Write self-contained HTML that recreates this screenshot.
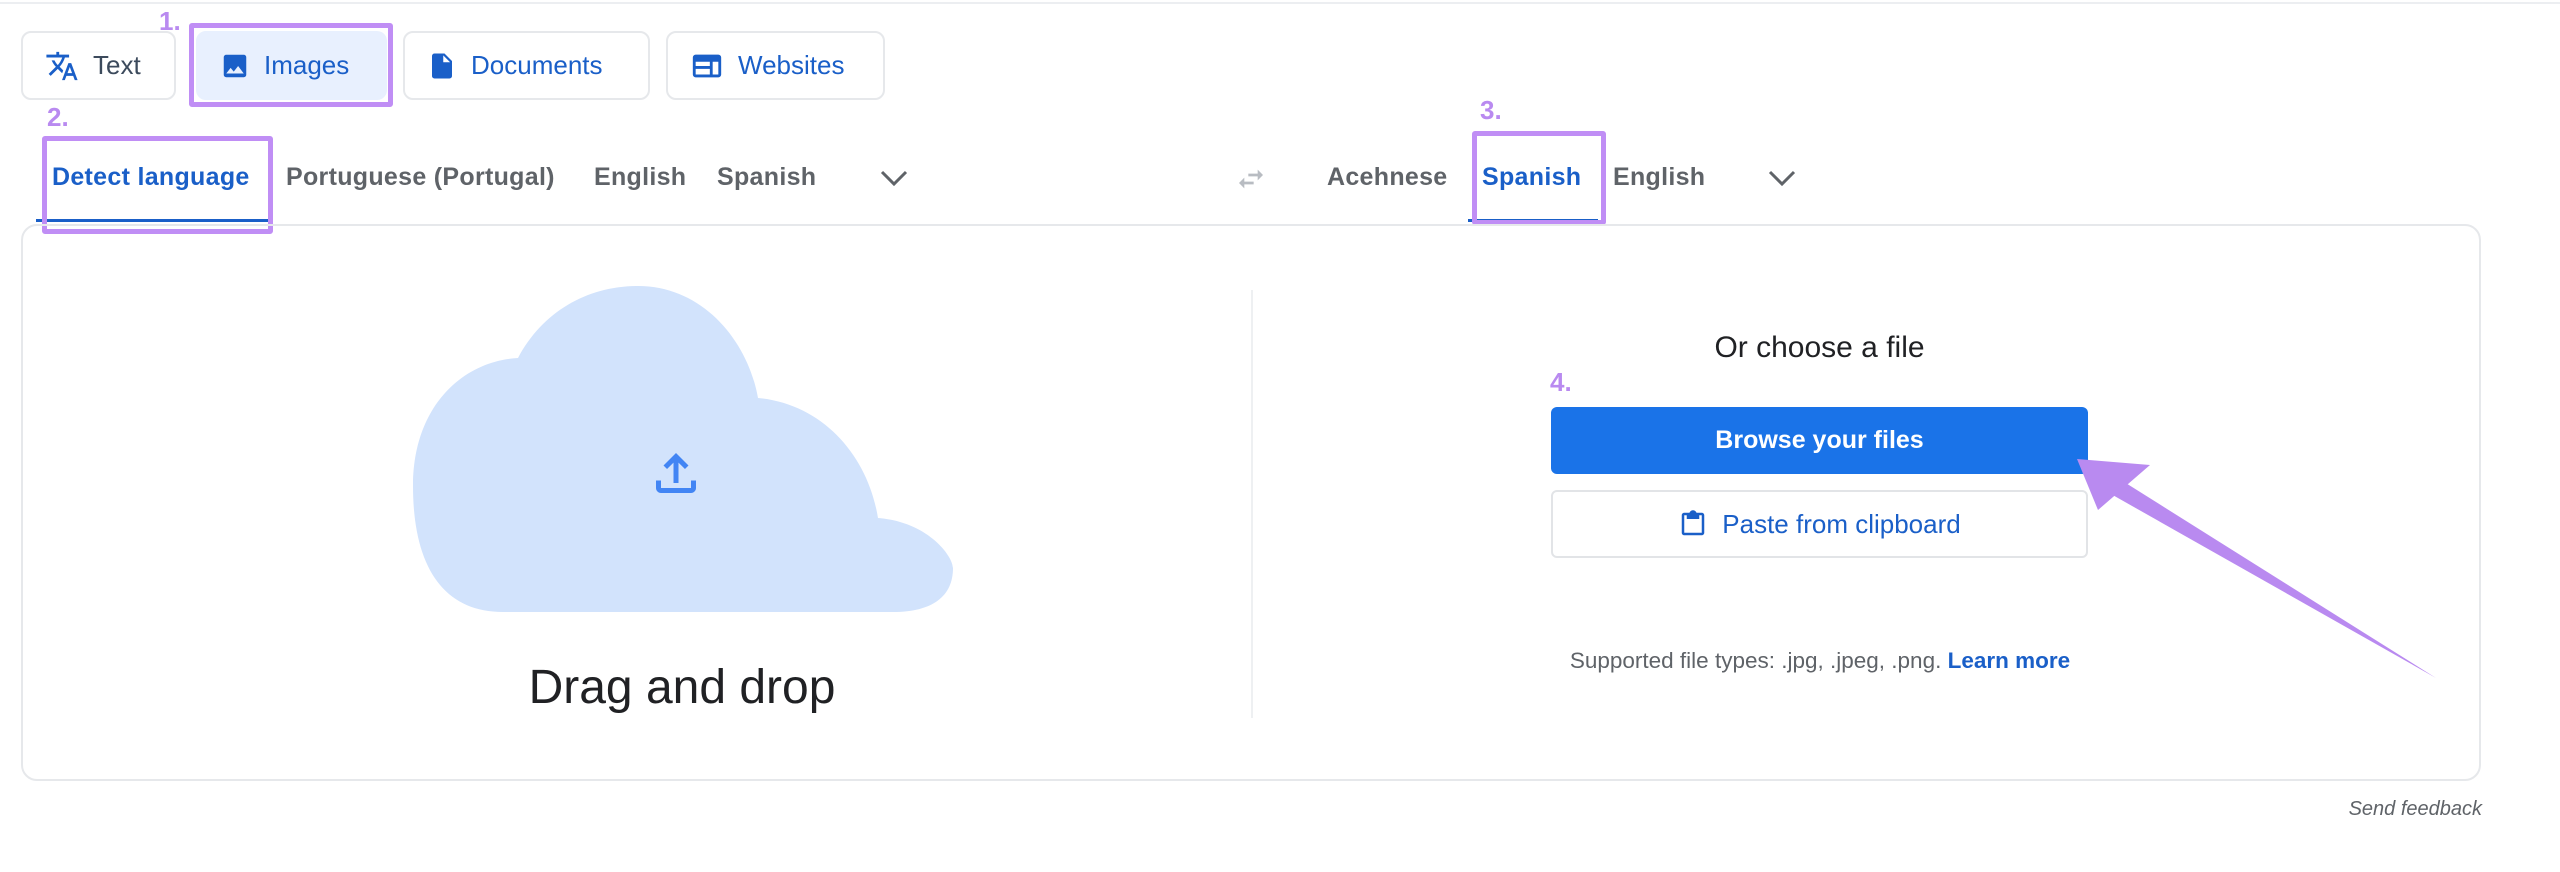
<!DOCTYPE html>
<html><head><meta charset="utf-8"><style>
*{margin:0;padding:0;box-sizing:border-box}
body{width:2560px;height:872px;background:#fff;font-family:"Liberation Sans",sans-serif;position:relative;overflow:hidden}
.a{position:absolute}
.tab{position:absolute;top:31px;height:69px;border:2px solid #e6e8eb;border-radius:10px;display:flex;align-items:center;font-size:26px;color:#1a5fc8;gap:14px;padding-left:22px}
.lang{position:absolute;top:163px;font-size:25px;font-weight:bold;color:#5f6368;letter-spacing:0.3px}
.num{position:absolute;font-size:26px;font-weight:bold;color:#b98af0}
.pbox{position:absolute;border:5px solid #c08ef5;border-radius:3px}
</style></head><body>
<div class="a" style="left:0;top:2px;width:2560px;height:2px;background:#eceef1"></div>

<div class="tab" style="left:21px;width:155px;color:#1a5fc8">
<svg width="34" height="34" viewBox="0 0 24 24"><path fill="#1a5fc8" d="M12.87 15.07l-2.54-2.51.03-.03A17.5 17.5 0 0014.07 6H17V4h-7V2H8v2H1v2h11.17C11.5 7.92 10.440 9.75 9 11.35 8.07 10.32 7.3 9.19 6.69 8h-2c.73 1.63 1.73 3.17 2.98 4.56l-5.09 5.02L4 19l5-5 3.11 3.11.76-2.04zM18.5 10h-2L12 22h2l1.12-3h4.75L21 22h2l-4.5-12zm-2.620 7l1.62-4.33L19.12 17h-3.24z"/></svg>
<span style="color:#3c4a5c">Text</span></div>
<div class="tab" style="left:196px;width:191px;background:#e8f0fe;border-color:#e8f0fe">
<svg width="30" height="30" viewBox="0 0 24 24"><path fill="#1a5fc8" d="M21 19V5a2 2 0 00-2-2H5a2 2 0 00-2 2v14a2 2 0 002 2h14a2 2 0 002-2zM8.5 13.5l2.5 3 3.5-4.5 4.5 6H5l3.5-4.5z"/></svg>Images</div>
<div class="pbox" style="left:189px;top:23px;width:204px;height:84px"></div>
<div class="tab" style="left:403px;width:247px">
<svg width="30" height="34" viewBox="0 0 24 24"><path fill="#1a5fc8" d="M14 2H6a2 2 0 00-2 2v16a2 2 0 002 2h12a2 2 0 002-2V8l-6-6zm-1 7V3.5L18.5 9H13z"/></svg>Documents</div>
<div class="tab" style="left:666px;width:219px">
<svg width="34" height="34" viewBox="0 0 24 24"><path fill="#1a5fc8" d="M20 4H4a2 2 0 00-2 2v12a2 2 0 002 2h16a2 2 0 002-2V6a2 2 0 00-2-2zM4 9h10v3H4V9zm0 5h10v4H4v-4zm16 4h-4V9h4v9z"/></svg>Websites</div>
<div class="num" style="left:159px;top:6px">1.</div>
<div class="num" style="left:47px;top:102px">2.</div>
<div class="num" style="left:1480px;top:95px">3.</div>
<div class="num" style="left:1550px;top:367px">4.</div>

<div class="lang" style="left:52px;color:#1a5fc8">Detect language</div>
<div class="a" style="left:36px;top:219px;width:233px;height:3px;background:#1a5fc8"></div>
<div class="pbox" style="left:42px;top:136px;width:231px;height:98px"></div>
<div class="lang" style="left:286px">Portuguese (Portugal)</div>
<div class="lang" style="left:594px">English</div>
<div class="lang" style="left:717px">Spanish</div>
<svg class="a" style="left:879px;top:168px" width="30" height="22" viewBox="0 0 30 22"><path d="M3 4l12 12 12-12" stroke="#5f6368" stroke-width="3" fill="none"/></svg>
<svg class="a" style="left:1234px;top:163px" width="34" height="32" viewBox="0 0 24 24"><path fill="#b8bcc2" d="M6.99 11L3 15l3.99 4v-3H14v-2H6.99v-3zM21 9l-3.99-4v3H10v2h7.01v3L21 9z"/></svg>
<div class="lang" style="left:1327px">Acehnese</div>
<div class="lang" style="left:1482px;color:#1a5fc8">Spanish</div>
<div class="a" style="left:1468px;top:219px;width:130px;height:3px;background:#1a5fc8"></div>
<div class="lang" style="left:1613px">English</div>
<svg class="a" style="left:1767px;top:168px" width="30" height="22" viewBox="0 0 30 22"><path d="M3 4l12 12 12-12" stroke="#5f6368" stroke-width="3" fill="none"/></svg>
<div class="pbox" style="left:1472px;top:131px;width:134px;height:94px"></div>

<div class="a" style="left:21px;top:224px;width:2460px;height:557px;border:2px solid #e6e8eb;border-radius:16px"></div>
<div class="a" style="left:1251px;top:290px;width:2px;height:428px;background:#eef0f2"></div>

<svg class="a" style="left:413px;top:286px" width="540" height="328" viewBox="0 0 540 328">
<path fill="#d2e3fc" d="M90 326 C30 326 0 280 0 200 C0 120 50 75 105 72 C130 25 175 0 225 0 C290 0 335 55 345 112 C410 118 455 170 465 232 C515 236 540 270 540 282 C540 310 520 326 480 326 Z"/>
</svg>
<svg class="a" style="left:646px;top:443px" width="60" height="60" viewBox="0 0 24 24"><path fill="#4285f4" d="M18 15v3H6v-3H4v3c0 1.1.9 2 2 2h12c1.1 0 2-.9 2-2v-3h-2zM7 9l1.41 1.41L11 7.83V16h2V7.83l2.59 2.58L17 9l-5-5-5 5z"/></svg>
<div class="a" style="left:432px;top:660px;width:500px;text-align:center;font-size:48px;color:#202124">Drag and drop</div>

<div class="a" style="left:1551px;top:331px;width:537px;text-align:center;font-size:30px;color:#202124">Or choose a file</div>
<div class="a" style="left:1551px;top:407px;width:537px;height:67px;background:#1a73e8;border-radius:6px;color:#fff;font-size:25px;font-weight:bold;display:flex;align-items:center;justify-content:center">Browse your files</div>
<div class="a" style="left:1551px;top:490px;width:537px;height:68px;border:2px solid #e2e4e7;border-radius:6px;color:#1a5fc8;font-size:26px;display:flex;align-items:center;justify-content:center;gap:14px">
<svg width="30" height="34" viewBox="0 0 24 24"><path fill="#1a5fc8" d="M19 3h-4.18C14.4 1.84 13.3 1 12 1s-2.4.84-2.82 2H5c-1.1 0-2 .9-2 2v14c0 1.1.9 2 2 2h14c1.1 0 2-.9 2-2V5c0-1.1-.9-2-2-2zm0 16H5V5h2v3h10V5h2v14z"/></svg>Paste from clipboard</div>
<div class="a" style="left:1520px;top:648px;width:600px;text-align:center;font-size:22.5px;color:#5f6368">Supported file types: .jpg, .jpeg, .png. <span style="color:#1a5fc8;font-weight:bold">Learn more</span></div>
<div class="a" style="left:2280px;top:798px;width:202px;text-align:right;font-size:20px;font-style:italic;color:#5f6368">Send feedback</div>

<svg class="a" style="left:0;top:0" width="2560" height="872">
<path d="M2436 678 L2105 470 L2095 485 Z" fill="#b98af0"/>
<path d="M2077 459 L2150 465 L2098 510 Z" fill="#b98af0"/>
</svg>
</body></html>
